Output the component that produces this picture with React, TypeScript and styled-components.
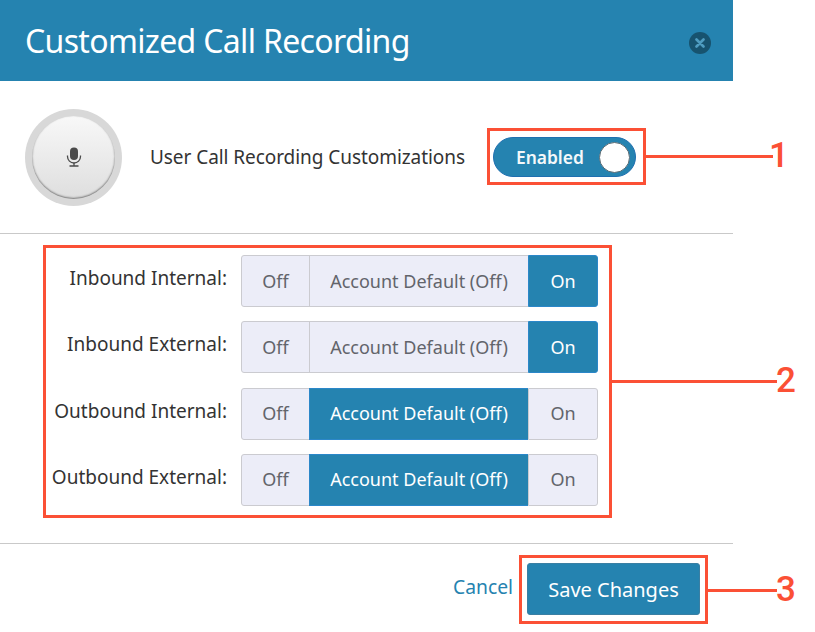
import React from "react";
import styled, { createGlobalStyle } from "styled-components";

const Global = createGlobalStyle`
  html, body { margin: 0; padding: 0; background: #fff; }
  body { font-family: "Noto Sans", "Open Sans", sans-serif; color: #333; }
`;

const Page = styled.div`
  position: relative;
  width: 815px;
  height: 632px;
  overflow: hidden;
  background: #fff;
`;
const Modal = styled.div`
  width: 733px;
  display: flex;
  flex-direction: column;
`;
const Header = styled.header`
  height: 81px;
  background: #2583b0;
  display: flex;
  align-items: center;
  justify-content: space-between;
  padding: 0 22px 0 25px;
`;
const Title = styled.h1`
  margin: 0;
  font-size: 32px;
  font-weight: 400;
  letter-spacing: -0.66px;
  color: #fff;
`;
const Close = styled.button`
  width: 22px;
  height: 22px;
  margin-top: 5px;
  padding: 0;
  border: 0;
  border-radius: 50%;
  background: #17536f;
  display: flex;
  align-items: center;
  justify-content: center;
`;
const TopRow = styled.section`
  height: 153px;
  box-sizing: border-box;
  border-bottom: 1px solid #c9c9c9;
  display: flex;
  align-items: center;
  padding: 0 0 0 25px;
`;
const MicRing = styled.div`
  width: 97px;
  height: 97px;
  border-radius: 50%;
  background: #d8d8d8;
  display: flex;
  align-items: center;
  justify-content: center;
`;
const MicButton = styled.div`
  width: 83px;
  height: 83px;
  border-radius: 50%;
  background: linear-gradient(#f8f8f8, #dedede);
  box-shadow: inset 0 -1px 2px #777;
  display: flex;
  align-items: center;
  justify-content: center;
`;
const RecLabel = styled.span`
  margin-left: 28px;
  width: 343px;
  font-size: 19px;
  letter-spacing: -0.06px;
  color: #333;
  white-space: nowrap;
`;
const Toggle = styled.div`
  width: 143px;
  height: 40px;
  box-sizing: border-box;
  border-radius: 20px;
  background: #2583b0;
  border: 1px solid #1f6fb0;
  display: flex;
  align-items: center;
  justify-content: space-between;
  padding: 0 5px 0 22px;
`;
const ToggleText = styled.span`
  padding-bottom: 1px;
  color: #f4f8fa;
  font-size: 17.4px;
  font-weight: 600;
`;
const Knob = styled.span`
  width: 31px;
  height: 31px;
  box-sizing: border-box;
  border-radius: 50%;
  background: #fff;
  border: 1px solid #5d6d75;
`;
const Settings = styled.section`
  height: 310px;
  box-sizing: border-box;
  border-bottom: 1px solid #c9c9c9;
  padding-top: 21px;
  display: flex;
  flex-direction: column;
  gap: 14.33px;
`;
const Row = styled.div`
  display: flex;
  align-items: center;
  height: 52px;
`;
const RowLabel = styled.span`
  width: 227px;
  padding-bottom: 6px;
  text-align: right;
  font-size: 19px;
  color: #333;
  white-space: nowrap;
`;
const Segments = styled.div`
  margin-left: 14px;
  display: flex;
  width: 357px;
  height: 52px;
`;
const Segment = styled.div<{ $active?: boolean; $width: number; $edge?: "left" | "middle" | "right" }>`
  width: ${(p) => p.$width}px;
  box-sizing: border-box;
  padding-bottom: 1px;
  display: flex;
  align-items: center;
  justify-content: center;
  font-size: 18px;
  background: ${(p) => (p.$active ? "#2583b0" : "#ecedf8")};
  color: ${(p) => (p.$active ? "#fff" : "#62646b")};
  border: 1px solid ${(p) => (p.$active ? "#2b87c9" : "#cbcbd0")};
  margin-left: ${(p) => (p.$edge === "middle" ? "-1px" : "0")};
  border-right-width: ${(p) => (p.$edge === "middle" ? 0 : 1)}px;
  border-radius: ${(p) =>
    p.$edge === "left" ? "3px 0 0 3px" : p.$edge === "right" ? "0 3px 3px 0" : "0"};
`;
const Footer = styled.footer`
  height: 88px;
  display: flex;
  align-items: flex-start;
  justify-content: flex-end;
  padding: 19px 33px 0 0;
  gap: 14px;
`;
const Cancel = styled.a`
  margin-top: 10px;
  font-size: 19.3px;
  color: #2583b0;
`;
const Save = styled.button`
  width: 173px;
  height: 52px;
  border: 1px solid #3a7fa3;
  border-radius: 3px;
  background: #2583b0;
  color: #fff;
  font-family: inherit;
  font-size: 20px;
  padding: 0;
`;
const Callout = styled.div<{ $x: number; $y: number; $w: number; $h: number }>`
  position: absolute;
  left: ${(p) => p.$x}px;
  top: ${(p) => p.$y}px;
  width: ${(p) => p.$w}px;
  height: ${(p) => p.$h}px;
  box-sizing: border-box;
  border: 3px solid #fb5035;
`;
const Leader = styled.div<{ $x: number; $y: number; $w: number }>`
  position: absolute;
  left: ${(p) => p.$x}px;
  top: ${(p) => p.$y}px;
  width: ${(p) => p.$w}px;
  height: 3px;
  background: #fb5035;
`;
const Digit = styled.span<{ $x: number; $y: number }>`
  position: absolute;
  left: ${(p) => p.$x}px;
  top: ${(p) => p.$y}px;
  font-family: Roboto, sans-serif;
  font-weight: 500;
  font-size: 35px;
  line-height: 40px;
  color: #fb5035;
`;

const rows: [string, "off" | "default" | "on"][] = [
  ["Inbound Internal:", "on"],
  ["Inbound External:", "on"],
  ["Outbound Internal:", "default"],
  ["Outbound External:", "default"],
];

export default function App() {
  return (
    <Page>
      <Global />
      <Modal>
        <Header>
          <Title>Customized Call Recording</Title>
          <Close aria-label="Close">
            <svg width="10" height="10" viewBox="0 0 10 10">
              <path d="M1.5 1.5l7 7M8.5 1.5l-7 7" stroke="#4f9cc0" strokeWidth="2.6" strokeLinecap="round" />
            </svg>
          </Close>
        </Header>
        <TopRow>
          <MicRing>
            <MicButton>
              <svg width="16" height="20" viewBox="0 0 16 20">
                <rect x="4" y="0.5" width="8" height="12.5" rx="4" fill="#4a4a4a" />
                <path d="M1.5 8.5v1a6.5 6.5 0 0 0 13 0v-1" fill="none" stroke="#4a4a4a" strokeWidth="1.3" />
                <path d="M8 16v3M3.5 19h9" fill="none" stroke="#4a4a4a" strokeWidth="1.3" />
              </svg>
            </MicButton>
          </MicRing>
          <RecLabel>User Call Recording Customizations</RecLabel>
          <Toggle>
            <ToggleText>Enabled</ToggleText>
            <Knob />
          </Toggle>
        </TopRow>
        <Settings>
          {rows.map(([label, value]) => (
            <Row key={label}>
              <RowLabel>{label}</RowLabel>
              <Segments>
                <Segment $width={69} $edge="left" $active={value === "off"}>Off</Segment>
                <Segment $width={219} $edge="middle" $active={value === "default"}>Account Default (Off)</Segment>
                <Segment $width={70} $edge="right" $active={value === "on"}>On</Segment>
              </Segments>
            </Row>
          ))}
        </Settings>
        <Footer>
          <Cancel>Cancel</Cancel>
          <Save>Save Changes</Save>
        </Footer>
      </Modal>

      <Callout $x={487} $y={128} $w={159} $h={57} />
      <Leader $x={646} $y={155} $w={127} />
      <Digit $x={769} $y={136}>1</Digit>

      <Callout $x={43} $y={245} $w={569} $h={273} />
      <Leader $x={612} $y={380} $w={165} />
      <Digit $x={776} $y={361}>2</Digit>

      <Callout $x={519} $y={555} $w={189} $h={69} />
      <Leader $x={708} $y={589} $w={69} />
      <Digit $x={776} $y={570}>3</Digit>
    </Page>
  );
}
